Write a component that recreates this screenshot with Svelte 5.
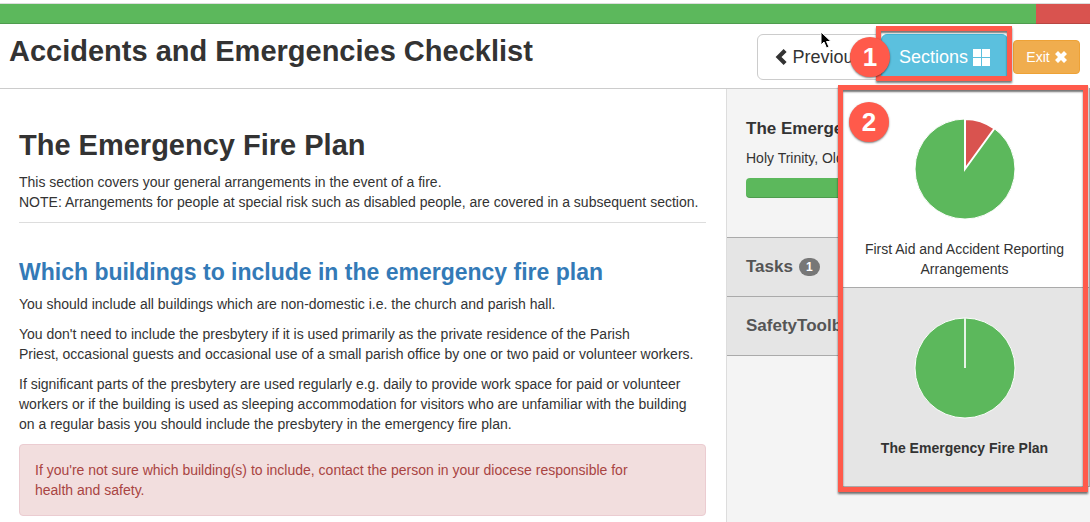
<script lang="ts">
	let progress = $state(95);

	let sections = $state([
		{ name: 'First Aid and Accident Reporting Arrangements', incomplete: 0.1, active: false },
		{ name: 'The Emergency Fire Plan', incomplete: 0, active: true },
	]);

	const radius = 50;

	// wedge running clockwise from twelve o'clock
	function wedge(share: number) {
		const angle = share * 2 * Math.PI;
		const x = 51 + radius * Math.sin(angle);
		const y = 51 - radius * Math.cos(angle);
		return `M51 51V1A${radius} ${radius} 0 0 1 ${x} ${y}Z`;
	}
</script>

<div class="page">
	<div class="top-progress">
		<div class="done" style="width: {progress}%"></div>
		<div class="left"></div>
	</div>

	<header class="page-header">
		<h1>Accidents and Emergencies Checklist</h1>
		<div class="actions">
			<button class="btn btn-default">
				<svg width="12" height="18" viewBox="0 0 12 18"><path d="M8.6 1 11.6 4 6.500 9l5.100 5-3 3L.6 9z" fill="currentColor" /></svg>
				<span>Previous</span>
			</button>
			<div class="sections-wrap">
				<button class="btn btn-info">
					<span>Sections</span>
					<svg width="17" height="17" viewBox="0 0 17 17"><path d="M0 0h8v8H0zM9 0h8v8H9zM0 9h8v8H0zM9 9h8v8H9z" fill="currentColor" /></svg>
				</button>
				<div class="callout callout-button"></div>
				<span class="marker marker-button">1</span>
			</div>
			<button class="btn btn-warning">
				<span>Exit</span>
				<svg width="12" height="12" viewBox="0 0 12 12"><path d="M3 0 6 3 9 0l3 3-3 3 3 3-3 3-3-3-3 3-3-3 3-3-3-3z" fill="currentColor" /></svg>
			</button>
			<svg class="pointer" width="12" height="18" viewBox="0 0 12 18"><path d="M1 1v13l3-3 2.500 6 2.500-1-2.500-5.500H11z" fill="#000" stroke="#fff" /></svg>
		</div>

		<nav class="menu">
			{#each sections as section}
				<a href="#section" class="menu-item" class:active={section.active}>
					<svg width="102" height="102" viewBox="0 0 102 102">
						<circle cx="51" cy="51" r={radius} fill="#5cb85c" stroke="#fff" />
						{#if section.incomplete}
							<path d={wedge(section.incomplete)} fill="#d9534f" stroke="#fff" stroke-width="2" />
						{:else}
							<path d="M51 51V1" stroke="#e6f4e6" stroke-width="2" />
						{/if}
					</svg>
					<span>{section.name}</span>
				</a>
			{/each}
			<div class="callout callout-menu"></div>
			<span class="marker marker-menu">2</span>
		</nav>
	</header>

	<div class="columns">
		<main>
			<h2>The Emergency Fire Plan</h2>
			<p>
				This section covers your general arrangements in the event of a fire.<br />
				NOTE: Arrangements for people at special risk such as disabled people, are covered in a subsequent section.
			</p>
			<hr />
			<h3>Which buildings to include in the emergency fire plan</h3>
			<p>You should include all buildings which are non-domestic i.e. the church and parish hall.</p>
			<p>
				You don't need to include the presbytery if it is used primarily as the private residence of the Parish<br />
				Priest, occasional guests and occasional use of a small parish office by one or two paid or volunteer workers.
			</p>
			<p>
				If significant parts of the presbytery are used regularly e.g. daily to provide work space for paid or volunteer
				workers or if the building is used as sleeping accommodation for visitors who are unfamiliar with the building<br />
				on a regular basis you should include the presbytery in the emergency fire plan.
			</p>
			<div class="alert" role="alert">
				If you're not sure which building(s) to include, contact the person in your diocese responsible for<br />
				health and safety.
			</div>
		</main>

		<aside>
			<div class="summary">
				<h4>The Emergency Fire Plan</h4>
				<p>Holy Trinity, Old</p>
				<div class="bar"></div>
			</div>
			<div class="panel">Tasks <span class="badge">1</span></div>
			<div class="panel">SafetyToolbox</div>
		</aside>
	</div>
</div>

<style>
	:global(body) {
		margin: 0;
		background: #fff;
	}

	.page {
		min-height: 100vh;
		display: flex;
		flex-direction: column;
		overflow: hidden;
		box-sizing: border-box;
		padding-top: 3px;
		font-family: "Liberation Sans", Arial, sans-serif;
		font-size: 14px;
		line-height: 20px;
		color: #333;
	}

	.top-progress {
		display: flex;
		height: 20px;
		border-top: 1px solid #ddd;
	}

	.top-progress div {
		box-shadow: inset 0 -1px 0 rgba(0, 0, 0, 0.15);
	}

	.done {
		background: #5cb85c;
	}

	.left {
		flex: 1;
		background: #d9534f;
	}

	.page-header {
		position: relative;
		display: flex;
		justify-content: space-between;
		height: 64px;
		padding: 0 10px 0 9px;
		border-bottom: 1px solid #ccc;
	}

	h1,
	h2,
	h3,
	h4,
	p {
		margin: 0;
	}

	h1,
	h2 {
		font-size: 29px;
		line-height: 33px;
		font-weight: 700;
	}

	h1 {
		padding-top: 11px;
	}

	.actions {
		position: relative;
		display: flex;
		align-items: center;
		padding-top: 2px;
		gap: 5px;
	}

	.btn {
		display: flex;
		align-items: center;
		justify-content: center;
		box-sizing: border-box;
		border: 1px solid;
		border-radius: 6px;
		font-family: inherit;
		font-size: 18px;
		line-height: 24px;
		gap: 5px;
		height: 46px;
		padding: 0 16px;
		cursor: pointer;
	}

	.btn-default {
		width: 124px;
		background: #fff;
		border-color: #ccc;
		color: #333;
	}

	.btn-info {
		width: 127px;
		background: #5bc0de;
		border-color: #46b8da;
		color: #fff;
	}

	.btn-warning {
		width: 67px;
		height: 34px;
		padding: 0 12px;
		border-radius: 4px;
		background: #f0ad4e;
		border-color: #eea236;
		color: #fff;
		font-size: 14px;
	}

	.sections-wrap {
		position: relative;
		margin-left: -5px;
	}

	.callout {
		position: absolute;
		box-sizing: border-box;
		border: 5px solid #ff5a4b;
		box-shadow: 0 2px 2px rgba(0, 0, 0, 0.55), inset 0 2px 2px rgba(0, 0, 0, 0.55);
		pointer-events: none;
	}

	.callout-button {
		inset: -8px -4px -1px -5px;
	}

	.marker {
		position: absolute;
		width: 40px;
		height: 40px;
		border-radius: 50%;
		background: #ff5a4b;
		box-shadow: 0 1px 2px rgba(0, 0, 0, 0.5);
		color: #fff;
		font-size: 26px;
		line-height: 40px;
		font-weight: 700;
		text-align: center;
	}

	.marker-button {
		left: -31px;
		top: 3px;
	}

	.pointer {
		position: absolute;
		left: 63px;
		top: 7px;
	}

	.menu {
		position: absolute;
		z-index: 1;
		top: 100%;
		right: 0;
		width: 251px;
		box-sizing: border-box;
		border: 1px solid #aaa;
		border-top: 0;
	}

	.menu-item {
		display: flex;
		flex-direction: column;
		align-items: center;
		gap: 19px;
		box-sizing: border-box;
		height: 199px;
		padding: 29px 20px 8px;
		border-top: 1px solid #fff;
		background: #fff;
		color: #333;
		text-align: center;
		text-decoration: none;
	}

	.menu-item.active {
		border-top-color: #aaa;
		background: #e5e5e5;
		font-weight: 700;
	}

	.callout-menu {
		inset: -3px 1px -6px -2px;
	}

	.marker-menu {
		left: 9px;
		top: 14px;
	}

	.columns {
		flex: 1;
		display: grid;
		grid-template-columns: minmax(0, 1fr) 364px;
	}

	main {
		padding: 40px 20px 0 19px;
	}

	h2 {
		margin-bottom: 10px;
	}

	hr {
		margin: 0 0 36px;
		border: 0;
		border-top: 1px solid #ddd;
	}

	h3 {
		margin-bottom: 9px;
		color: #337ab7;
		font-size: 23px;
		line-height: 26px;
		font-weight: 700;
	}

	main p {
		margin-bottom: 10px;
	}

	.alert {
		padding: 15px;
		border: 1px solid #ebccd1;
		border-radius: 4px;
		background: #f2dede;
		color: #a94442;
	}

	aside {
		border-left: 1px solid #ddd;
		background: #f4f4f4;
	}

	.summary {
		padding: 30px 19px 39px;
	}

	h4 {
		margin-bottom: 9px;
		font-size: 17px;
		line-height: 20px;
	}

	.summary p {
		margin-bottom: 10px;
	}

	.bar {
		height: 20px;
		border-radius: 4px;
		background: #5cb85c;
		box-shadow: inset 0 -1px 0 rgba(0, 0, 0, 0.15);
	}

	.panel {
		display: flex;
		align-items: center;
		gap: 6px;
		height: 58px;
		padding: 0 19px;
		border-top: 1px solid #aaa;
		background: #e5e5e5;
		color: #555;
		font-size: 17px;
		font-weight: 700;
	}

	.panel:last-child {
		border-bottom: 1px solid #aaa;
	}

	.badge {
		padding: 3px 7px;
		border-radius: 10px;
		background: #777;
		color: #fff;
		font-size: 12px;
		line-height: 12px;
	}
</style>
